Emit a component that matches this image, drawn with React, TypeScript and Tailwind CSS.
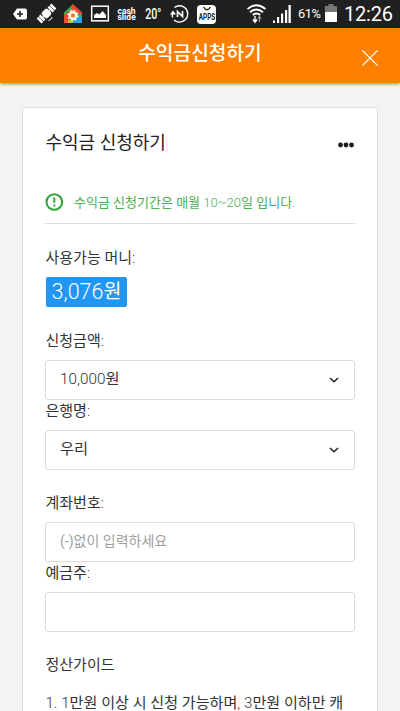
import React from 'react';

// Latin runs are set light, Hangul stays regular
const Mixed: React.FC<{ text: string }> = ({ text }) => (
  <>
    {text.split(/([0-9.,:~]+)/).map((part, i) =>
      i % 2 ? (
        <span key={i} className="font-light">
          {part}
        </span>
      ) : (
        part
      )
    )}
  </>
);

const Label: React.FC<{ text: string }> = ({ text }) => (
  <div className="h-5 pl-[0.5px] pt-px leading-5">
    <Mixed text={text} />
  </div>
);

const SelectField: React.FC<{ label: string; value: string }> = ({ label, value }) => (
  <div>
    <Label text={label} />
    <button className="mt-2.5 flex h-10 w-full items-center justify-between rounded-[3px] border border-[#dcdcdc] pl-3.5 pr-[14px] text-left text-[15.3px]">
      <span className="pb-px">
        <Mixed text={value} />
      </span>
      <svg className="h-3 w-3" viewBox="0 0 12 12" fill="none" stroke="#222" strokeWidth="1.5">
        <path d="M2 4l4 3.8L10 4" />
      </svg>
    </button>
  </div>
);

const InputField: React.FC<{ label: string; placeholder?: string }> = ({ label, placeholder }) => (
  <div>
    <Label text={label} />
    <input
      className="mt-2.5 block h-10 w-full rounded-[3px] border border-[#dcdcdc] px-3.5 pb-0.5 text-[14px] outline-none placeholder:text-[#a0a0a0]"
      placeholder={placeholder}
    />
  </div>
);

const StatusBar: React.FC = () => (
  <div className="flex h-7 shrink-0 items-center bg-[#202020] font-['Roboto'] text-white">
    <svg className="h-7 w-[116px] shrink-0" viewBox="0 0 116 28" fill="none">
      <path d="M17 8.5h8a2 2 0 0 1 2 2v7a2 2 0 0 1-2 2h-8L13 14z" fill="#fff" />
      <path d="M17 14h6M20 11v6" stroke="#202020" strokeWidth="1.6" />
      <g transform="translate(46.5 13.5) rotate(-45)" fill="#fff">
        <rect x="-4" y="-4" width="8" height="8" rx="2" />
        <path d="M-10.500-3.500h2.500v7h-2.500zM-7.500-3.500h2.500v7h-2.500zM5-3.500h2.500v7H5zM8-3.500h2.500v7H8z" />
        <path d="M-10-.5h20v1h-20z" />
      </g>
      <path d="M48.500 20.500q3-.5 3.500-3.500" stroke="#fff" strokeWidth="1" />
      <path d="M64 13l9-5 9 5v10H64z" fill="#f5822a" />
      <path d="M64 14l5-3 4 5-5 7h-4z" fill="#ee4d33" />
      <path d="M73 4l-9 8.500V15l9-7z" fill="#35a853" />
      <path d="M73 4l9 8.500V15l-4-1-7-7z" fill="#ee4433" />
      <path d="M77 13l5 1.500V18h-6z" fill="#35a853" />
      <path d="M74 17h8v6h-9z" fill="#25a5e8" />
      <path d="M68 20l5-1v4h-5z" fill="#b5cc30" />
      <circle cx="73" cy="15.500" r="3.200" stroke="#fff" strokeWidth="2.400" />
      <circle cx="73" cy="15.500" r="4.900" stroke="#fff" strokeWidth="1.400" strokeDasharray="1.925 1.925" />
      <circle cx="73" cy="15.500" r="2" fill="#f5822a" />
      <rect x="91.700" y="6.200" width="16.600" height="14.600" stroke="#fff" strokeWidth="1.500" />
      <path d="M94 18v-3l3-2 2.500 1.500 3-3.500L106 15v3z" fill="#fff" />
    </svg>
    <div className="flex w-[27px] flex-col pl-[1.500px] pt-px text-[8.500px] font-bold">
      <span className="h-[6.500px] leading-[6px]">cash</span>
      <span className="h-[7px] leading-[7px]">slide</span>
    </div>
    <div className="w-[25px] origin-left scale-x-[.76] pl-[3px] text-[14px] font-medium">20°</div>
    <svg className="h-7 w-[22px] shrink-0" viewBox="168 0 22 28" fill="none">
      <path d="M174.500 7.500a8.200 8.200 0 1 1-.5 12.500M172.500 17.500a8 8 0 0 1 .5-5" stroke="#fff" strokeWidth="1.400" />
      <path d="M170 14.500l3-4 3 4z" fill="#fff" />
      <path d="M177.500 17v-5.500l5 5V11" stroke="#fff" strokeWidth="1.700" />
    </svg>
    <div className="ml-[7px] flex h-[19px] w-[19px] flex-col items-center rounded-[4px] bg-white text-[#202020]">
      <svg className="h-[8px] w-3 shrink-0" viewBox="0 0 12 8" fill="none" stroke="#202020" strokeWidth="1.3">
        <path d="M2.500 2q3.500 5.500 7 0" />
      </svg>
      <span className="scale-x-75 text-[8.5px] font-bold leading-[8px]">APPS</span>
    </div>
    <svg className="ml-[31px] h-7 w-[46px] shrink-0" viewBox="247 0 46 28" fill="none">
      <path d="M247.500 9q9-7.500 18 0M250 12.200q6.500-5.500 13 0M252.700 15q3.800-3 7.600 0" stroke="#fff" strokeWidth="1.800" />
      <path d="M255 16v6M253 19.500l2 2.700 2-2.700" stroke="#fff" strokeWidth="1.400" />
      <path d="M259.500 22v-5M257.700 18.500l1.800-2 1.800 2" stroke="#aaa" strokeWidth="1.100" />
      <path d="M273 20.500h2V23h-2zM277 17h2.200v6H277zM281 13.500h2.200V23H281zM285 10h2.200v13H285zM288.500 5h2.300v18h-2.300z" fill="#fff" />
    </svg>
    <div className="ml-[5px] w-[26px] text-[12.800px] tracking-[-0.4px]">61%</div>
    <svg className="h-7 w-[14px] shrink-0" viewBox="325 0 14 28">
      <path d="M329.500 4h5v2h3.500v7h-12V6h3.500z" fill="#777" />
      <path d="M326 12h12v10h-12z" fill="#fff" />
    </svg>
    <div className="ml-[6px] text-[20px] tracking-[-0.2px]">12:26</div>
  </div>
);

export default function App() {
  return (
    <div className="flex h-[711px] w-[400px] flex-col overflow-hidden bg-[#f4f4f4] font-['Roboto','Noto_Sans_CJK_KR',sans-serif] text-[15px] font-normal text-[#333]">
      <StatusBar />
      <header className="relative z-10 flex h-[55px] shrink-0 bg-[#ff7f00] shadow-[0_1px_3px_rgba(0,0,0,.45)]">
        <div className="w-12" />
        <h1 className="flex-1 pt-3 text-center text-[19.2px] font-medium leading-7 text-white">수익금신청하기</h1>
        <button className="flex w-12 justify-center pt-[22px]">
          <svg className="ml-[-13px] h-4 w-4" viewBox="0 0 16 16" stroke="#fff" strokeWidth="1.1">
            <path d="M.5.5l15 15M15.500.5l-15 15" />
          </svg>
        </button>
      </header>

      <main className="mx-[22px] mt-6 h-[640px] shrink-0 rounded-[3px] border border-[#dedede] bg-white px-[22px] pt-5">
        <div className="flex h-7 items-center justify-between">
          <h2 className="pl-[0.5px] pt-px text-[18px] leading-7 text-[#222]">수익금 신청하기</h2>
          <svg className="mt-[5px] h-[6px] w-[17px]" viewBox="0 0 17 6" fill="#1d1d1d">
            <circle cx="2.500" cy="3" r="2.400" />
            <circle cx="8" cy="3" r="2.400" />
            <circle cx="13.500" cy="3" r="2.400" />
          </svg>
        </div>

        <div className="mt-9 flex h-8 items-start border-b border-[#dcdcdc] text-[#4caf50]">
          <svg className="mt-px h-[18px] w-[18px]" viewBox="0 0 18 18" fill="none" stroke="#2ca637" strokeWidth="2">
            <circle cx="9.300" cy="9" r="7.800" />
            <path d="M9.300 4.500v5.300M9.300 11.500v2" />
          </svg>
          <p className="ml-[11px] whitespace-nowrap pt-px text-[13px] leading-5">
            <Mixed text="수익금 신청기간은 매월 10~20일 입니다." />
          </p>
        </div>

        <div className="mt-[23px]">
          <Label text="사용가능 머니:" />
        </div>
        <div className="ml-px mt-2.5 flex h-[30px] w-[81px] items-center justify-center rounded-[2px] bg-[#2196f3] text-[19.500px] leading-[30px] text-white">
          <span className="text-[21.500px] font-light">3,076</span>원
        </div>

        <div className="mt-[23px]">
          <SelectField label="신청금액:" value="10,000원" />
          <SelectField label="은행명:" value="우리" />
        </div>

        <div className="mt-[22px]">
          <InputField label="계좌번호:" placeholder="(-)없이 입력하세요" />
          <InputField label="예금주:" />
        </div>

        <div className="mt-[22px]">
          <Label text="정산가이드" />
        </div>
        <p className="mt-[18px] whitespace-nowrap pl-[0.5px] pt-px text-[15.100px] leading-5">
          <Mixed text="1. 1만원 이상 시 신청 가능하며, 3만원 이하만 캐" />
        </p>
      </main>
    </div>
  );
}
